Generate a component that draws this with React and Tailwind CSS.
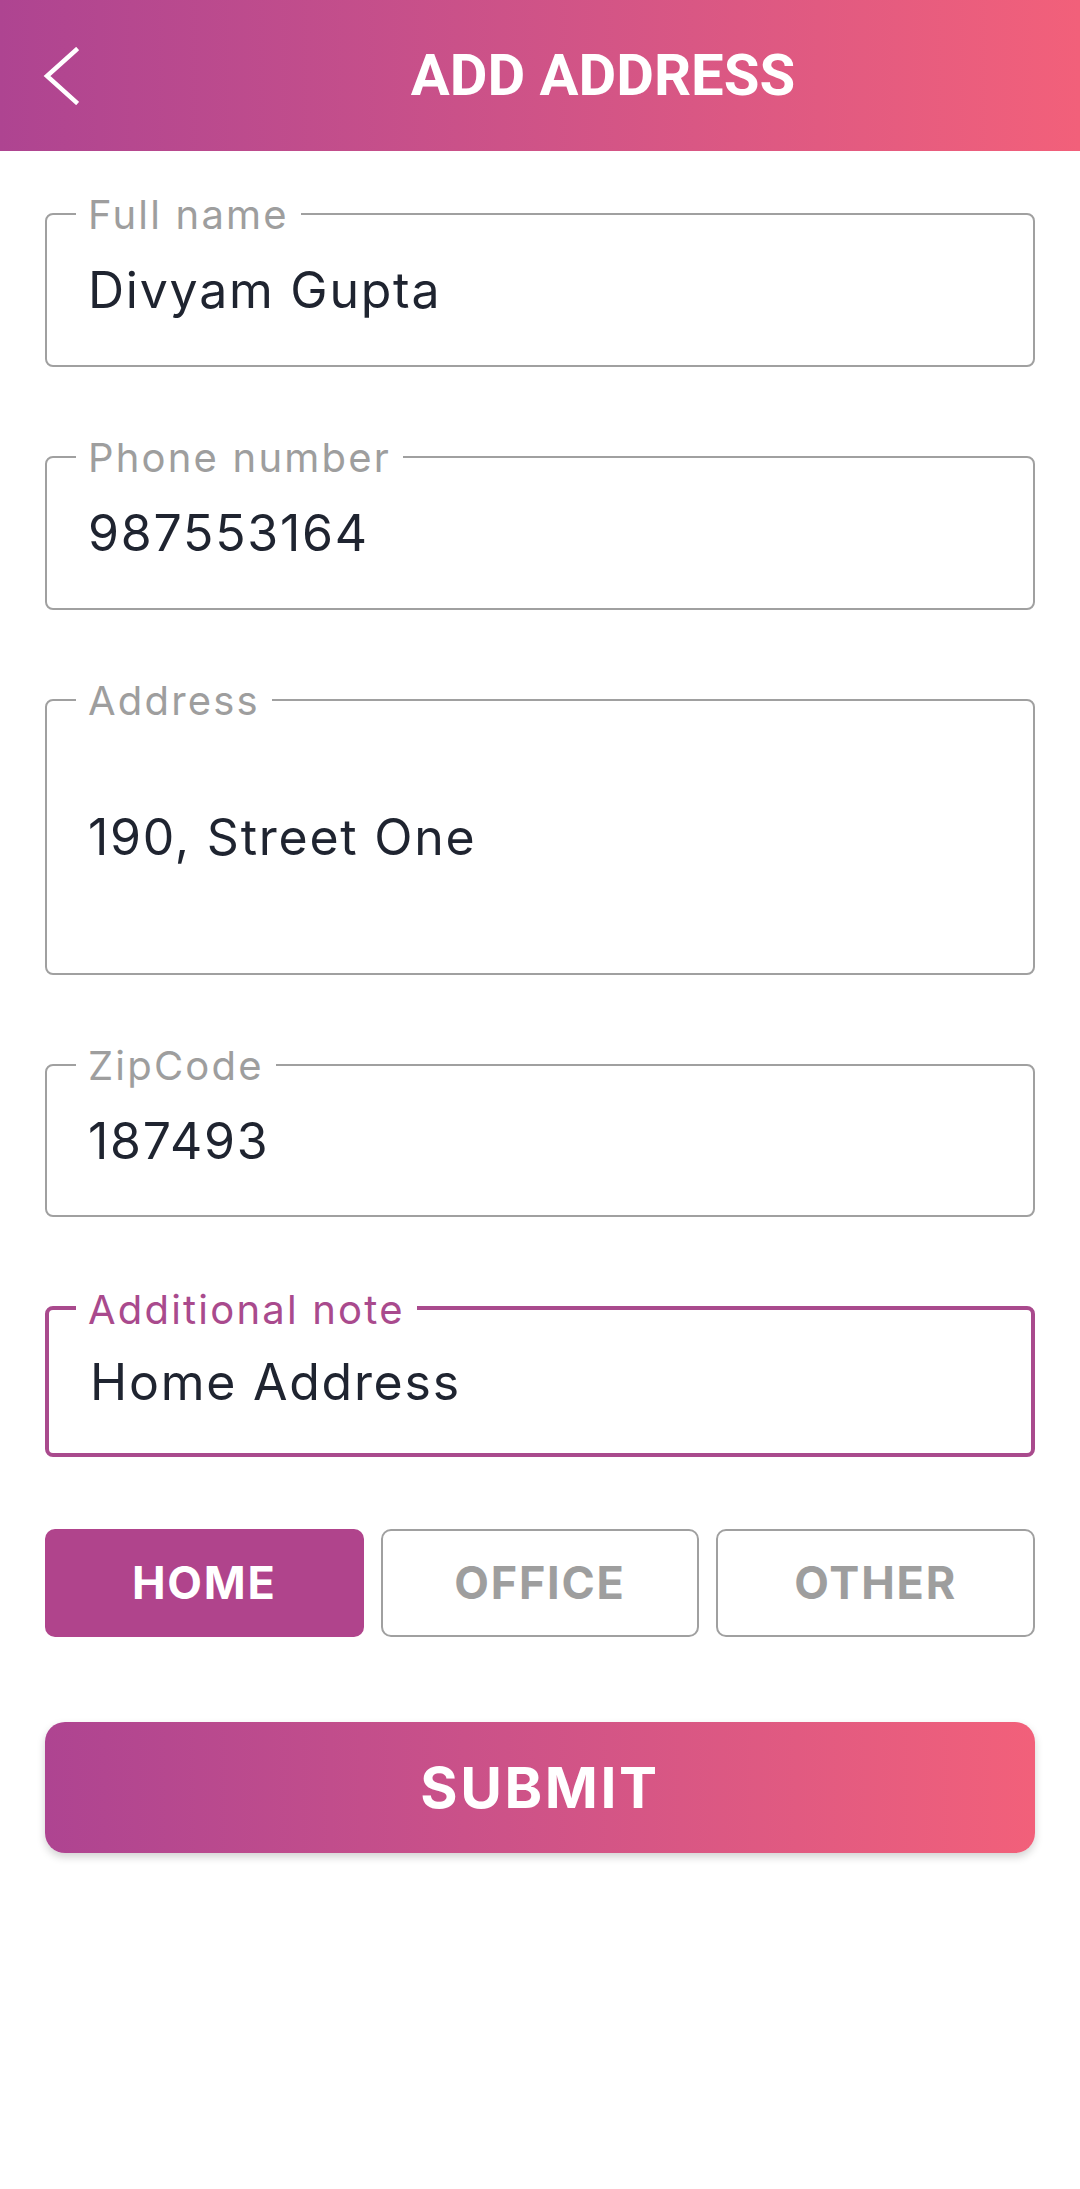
import React from "react";

const fields = [
  { label: "Full name", value: "Divyam Gupta", height: "h-[154px]" },
  { label: "Phone number", value: "987553164", height: "h-[154px]" },
  { label: "Address", value: "190, Street One", height: "h-[276px]" },
  { label: "ZipCode", value: "187493", height: "h-[153px]" },
  { label: "Additional note", value: "Home Address", height: "h-[151px]", active: true },
];

const types = ["HOME", "OFFICE", "OTHER"];

const OutlinedField = ({ label, value, height, active }) => (
  <div
    className={`relative flex items-center rounded-[8px] bg-white px-[41px] ${height} ${
      active ? "border-[4px] border-[#a94a8d]" : "border-[2.5px] border-[#a0a0a0]"
    }`}
  >
    <span
      className={`absolute top-0 -translate-y-1/2 bg-white px-[12px] text-[40px] leading-none tracking-[0.055em] ${
        active ? "left-[27px] text-[#a94a8d]" : "left-[29px] text-[#9e9e9e]"
      }`}
    >
      {label}
    </span>
    <span className="text-[50px] leading-none tracking-[0.035em] text-[#1f2430]">
      {value}
    </span>
  </div>
);

export default function App() {
  const selected = "HOME";

  return (
    <div
      className="min-h-[2189px] w-[1080px] bg-white"
      style={{ fontFamily: "Inter, 'Open Sans', sans-serif" }}
    >
      {/* header */}
      <div className="flex h-[151px] items-center bg-gradient-to-r from-[#ae4491] to-[#f2607a]">
        <div className="flex w-[126px] items-center pl-[43px]">
          <svg width="36" height="58" viewBox="0 0 36 58" fill="none">
            <polyline
              points="33,3 4,29 33,55"
              stroke="white"
              strokeWidth="4.5"
              strokeLinecap="square"
              strokeLinejoin="miter"
            />
          </svg>
        </div>
        <h1
          className="flex-1 text-center text-[58px] font-bold text-white"
          style={{ fontFamily: "Roboto, 'Liberation Sans', sans-serif" }}
        >
          ADD ADDRESS
        </h1>
      </div>

      {/* form */}
      <div className="flex flex-col gap-[89px] px-[45px] pt-[62px]">
        {fields.map((f) => (
          <OutlinedField key={f.label} {...f} />
        ))}
      </div>

      {/* address type */}
      <div className="mt-[72px] grid grid-cols-3 gap-[17px] px-[45px]">
        {types.map((t) =>
          t === selected ? (
            <button
              key={t}
              className="flex h-[108px] items-center justify-center rounded-[10px] bg-[#b0448c] text-[45px] font-bold tracking-[0.04em] text-white"
            >
              {t}
            </button>
          ) : (
            <button
              key={t}
              className="flex h-[108px] items-center justify-center rounded-[10px] border-[2.5px] border-[#a0a0a0] bg-white text-[45px] font-bold tracking-[0.04em] text-[#9e9e9e]"
            >
              {t}
            </button>
          )
        )}
      </div>

      {/* submit */}
      <div className="mt-[85px] px-[45px]">
        <button className="flex h-[131px] w-full items-center justify-center rounded-[20px] bg-gradient-to-r from-[#ae4491] to-[#f2607a] text-[57px] font-bold tracking-[0.045em] text-white shadow-[0_4px_8px_rgba(0,0,0,0.18)]">
          SUBMIT
        </button>
      </div>
    </div>
  );
}
